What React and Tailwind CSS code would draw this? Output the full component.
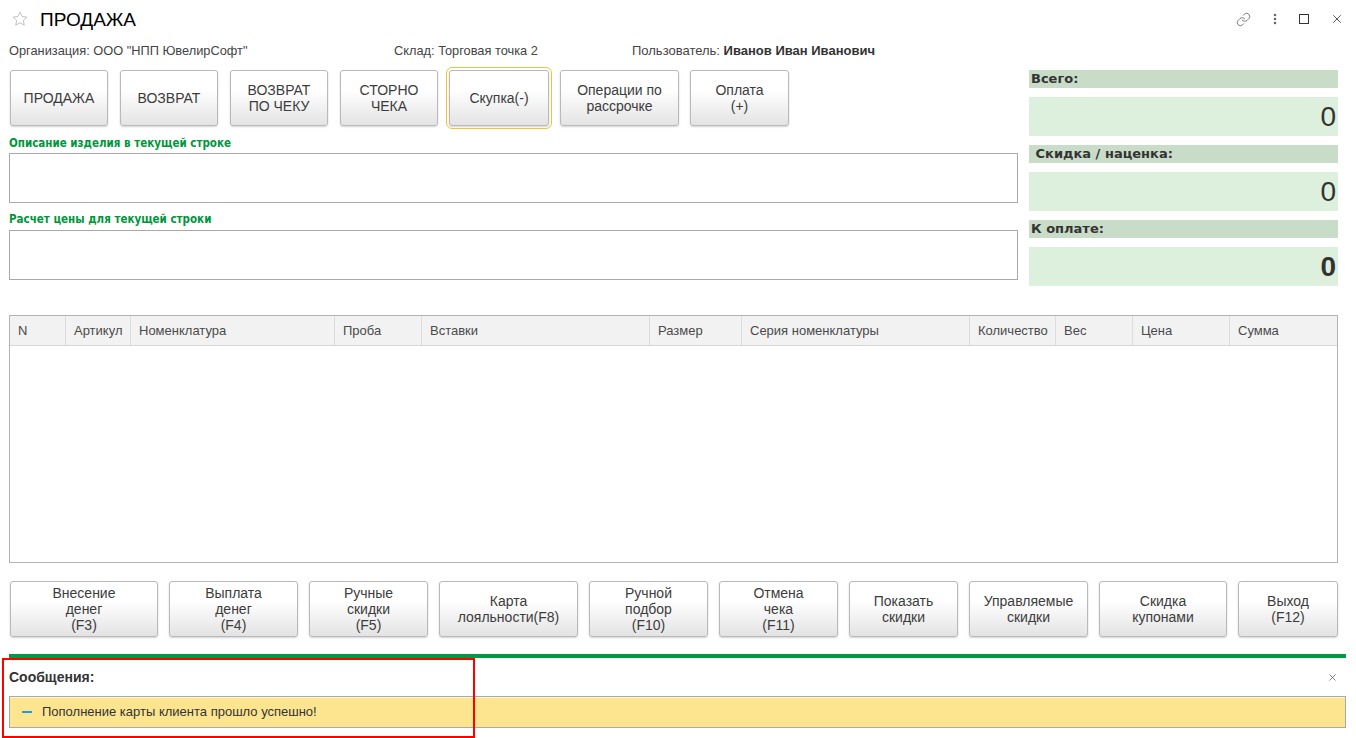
import React from "react";
import { Link, EllipsisVertical, X } from "lucide-react";

const Btn = ({ w, children, extra = "" }) => (
  <div
    className={`h-[56px] shrink-0 flex items-center justify-center text-center rounded-[3px] border border-[#b9b9b9] bg-linear-to-b from-white from-35% to-[#e3e3e3] shadow-[0_1px_2px_rgba(0,0,0,0.18)] text-[14px] leading-[16px] text-[#3c3c3c] ${extra}`}
    style={{ width: w }}
  >
    <div>{children}</div>
  </div>
);

const cols = [
  ["N", 57],
  ["Артикул", 65],
  ["Номенклатура", 204],
  ["Проба", 87],
  ["Вставки", 228],
  ["Размер", 92],
  ["Серия номенклатуры", 228],
  ["Количество", 86],
  ["Вес", 77],
  ["Цена", 97],
  ["Сумма", 108],
];

const Total = ({ label, value, bold, first, lead }) => (
  <div className={first ? "" : "mt-[9px]"}>
    <div
      className="h-[18px] bg-[#c8dcc8] flex items-center text-[13px] font-bold text-[#333] pl-[2px]"
      style={{ fontFamily: '"DejaVu Sans", Verdana, sans-serif' }}
    >
      {lead ? "\u00a0" : ""}
      {label}
    </div>
    <div className="mt-[9px] h-[39px] bg-[#ddf0dd] flex items-center justify-end pr-[2px]">
      <span
        className={`text-[28px] leading-none text-[#333] ${bold ? "font-bold" : ""}`}
      >
        {value}
      </span>
    </div>
  </div>
);

export default function App() {
  return (
    <div
      className="relative w-[1356px] h-[738px] bg-white overflow-hidden text-[#333]"
      style={{ fontFamily: '"Liberation Sans", Arial, sans-serif' }}
    >
      {/* Title row */}
      <div className="h-[38px] flex items-center pl-[11px] pr-[12px]">
        <svg width="18" height="18" viewBox="0 0 24 24" className="shrink-0">
          <path
            d="M12 2.8l2.75 5.9 6.45.75-4.8 4.4 1.3 6.35L12 17.05 6.3 20.2l1.3-6.35-4.8-4.4 6.45-.75z"
            fill="none"
            stroke="#b5b5b5"
            strokeWidth="1.1"
            strokeLinejoin="round"
          />
        </svg>
        <div className="ml-[11px] text-[19px] leading-none text-black">ПРОДАЖА</div>
        <div className="ml-auto flex items-center">
          <Link size={15} strokeWidth={1.6} color="#7a7a7a" className="mr-[17px]" />
          <EllipsisVertical size={14} strokeWidth={2.4} color="#666" className="mr-[17px]" />
          <div className="w-[10px] h-[10px] border-[1.5px] border-[#333] mr-[21px]" />
          <X size={14} strokeWidth={1.4} color="#333" />
        </div>
      </div>

      {/* Info row */}
      <div className="h-[32px] pt-[6px] flex text-[12.8px] leading-[14px] text-[#444] pl-[9px]">
        <div className="w-[385px]">Организация: ООО "НПП ЮвелирСофт"</div>
        <div className="w-[238px]">Склад: Торговая точка 2</div>
        <div className="text-[13px]">
          Пользователь: <span className="font-bold text-[#333]">Иванов Иван Иванович</span>
        </div>
      </div>

      {/* Main section */}
      <div className="flex pl-[9px] pr-[18px] gap-[11px]">
        <div className="w-[1009px] shrink-0">
          <div className="flex pl-[1px] gap-[12px]">
            <Btn w={98}>ПРОДАЖА</Btn>
            <Btn w={98}>ВОЗВРАТ</Btn>
            <Btn w={98}>
              ВОЗВРАТ
              <br />
              ПО ЧЕКУ
            </Btn>
            <Btn w={98}>
              СТОРНО
              <br />
              ЧЕКА
            </Btn>
            <div className="flex gap-[11px] -ml-[1px]">
              <Btn w={100} extra="outline outline-1 outline-offset-2 outline-[#f0c23a]">
                Скупка(-)
              </Btn>
              <Btn w={119}>
                Операции по
                <br />
                рассрочке
              </Btn>
              <Btn w={99}>
                Оплата
                <br />
                (+)
              </Btn>
            </div>
          </div>
          <div
            className="mt-[10px] h-[14px] leading-[14px] text-[11.5px] font-bold text-[#00963c]"
            style={{ fontFamily: '"DejaVu Sans Condensed", "DejaVu Sans", Verdana, sans-serif' }}
          >
            Описание изделия в текущей строке
          </div>
          <div className="mt-[3px] h-[50px] border border-[#a9a9a9] bg-white" />
          <div
            className="mt-[9px] h-[14px] leading-[14px] text-[11.5px] font-bold text-[#00963c]"
            style={{ fontFamily: '"DejaVu Sans Condensed", "DejaVu Sans", Verdana, sans-serif' }}
          >
            Расчет цены для текущей строки
          </div>
          <div className="mt-[4px] h-[50px] border border-[#a9a9a9] bg-white" />
        </div>
        <div className="w-[309px] shrink-0">
          <Total first label="Всего:" value="0" />
          <Total lead label="Скидка / наценка:" value="0" />
          <Total label="К оплате:" value="0" bold />
        </div>
      </div>

      {/* Table */}
      <div className="ml-[9px] mt-[29px] w-[1329px] h-[248px] border border-[#b3b3b3] flex flex-col">
        <div className="h-[30px] flex bg-[#f2f2f2] border-b border-[#d6d6d6]">
          {cols.map(([name, w], i) => (
            <div
              key={name}
              className={`h-full flex items-center pl-[8px] text-[13px] text-[#4a4a4a] ${
                i < cols.length - 1 ? "border-r border-[#dcdcdc]" : ""
              }`}
              style={{ width: i === 0 ? w - 1 : i === cols.length - 1 ? w - 1 : w }}
            >
              {name}
            </div>
          ))}
        </div>
        <div className="flex-1 bg-white" />
      </div>

      {/* Bottom buttons */}
      <div className="mt-[18px] pl-[10px] flex gap-[11px]">
        <Btn w={148}>
          Внесение
          <br />
          денег
          <br />
          (F3)
        </Btn>
        <Btn w={129}>
          Выплата
          <br />
          денег
          <br />
          (F4)
        </Btn>
        <Btn w={119}>
          Ручные
          <br />
          скидки
          <br />
          (F5)
        </Btn>
        <Btn w={139}>
          Карта
          <br />
          лояльности(F8)
        </Btn>
        <Btn w={119}>
          Ручной
          <br />
          подбор
          <br />
          (F10)
        </Btn>
        <Btn w={119}>
          Отмена
          <br />
          чека
          <br />
          (F11)
        </Btn>
        <Btn w={109}>
          Показать
          <br />
          скидки
        </Btn>
        <Btn w={119}>
          Управляемые
          <br />
          скидки
        </Btn>
        <Btn w={128}>
          Скидка
          <br />
          купонами
        </Btn>
        <Btn w={100}>
          Выход
          <br />
          (F12)
        </Btn>
      </div>

      {/* Messages */}
      <div className="mt-[17px] ml-[9px] mr-[10px] h-[4px] bg-[#009a44]" />
      <div className="mt-[12px] ml-[9px] mr-[18px] h-[14px] flex items-center justify-between">
        <div className="text-[14px] font-bold text-[#333]">Сообщения:</div>
        <X size={11} strokeWidth={1.8} color="#666" />
      </div>
      <div className="mt-[12px] ml-[9px] mr-[10px] h-[32px] border border-[#a9a9a9] bg-[#fde590] shadow-[inset_0_1px_0_#fff7d6] flex items-center">
        <div className="ml-[12px] w-[10px] h-[2px] bg-[#1e9ee0]" />
        <div className="ml-[10px] text-[13px] text-[#333]">
          Пополнение карты клиента прошло успешно!
        </div>
      </div>

      {/* Red annotation */}
      <div className="absolute left-[2px] top-[658px] w-[473px] h-[80px] border-2 border-[#ff0000] pointer-events-none" />
    </div>
  );
}
